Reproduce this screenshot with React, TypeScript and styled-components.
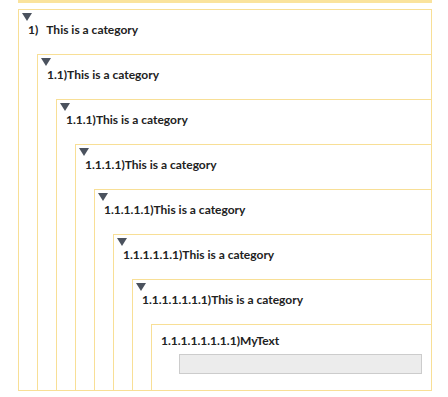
import React from "react";
import styled, { createGlobalStyle } from "styled-components";

const GlobalStyle = createGlobalStyle`
  html, body { margin: 0; padding: 0; background: #ffffff; }
  body { font-family: Lato, "Open Sans", Arial, sans-serif; color: #222222; }
`;

const BORDER = "#f8df96";

const Page = styled.div`
  width: 414px;
  margin-left: 18px;
  display: flex;
  flex-direction: column;
  gap: 6px;
  height: 397px;
  overflow: hidden;
`;

const TopBand = styled.div`
  height: 3px;
  flex-shrink: 0;
  background: #fae39d;
`;

const OuterBox = styled.div`
  border: 1px solid ${BORDER};
  flex-shrink: 0;
`;

const NestedBox = styled.div`
  border-top: 1px solid ${BORDER};
  border-left: 1px solid ${BORDER};
  margin-left: 18px;
`;

const LeafBox = styled(NestedBox)`
  padding-bottom: 16px;
`;

const Header = styled.div`
  height: 44px;
  padding-top: 3px;
  box-sizing: border-box;
  display: flex;
  flex-direction: column;
  align-items: flex-start;
`;

const Triangle = styled.span`
  display: block;
  margin-left: 3px;
  width: 0;
  height: 0;
  border-left: 5px solid transparent;
  border-right: 5px solid transparent;
  border-top: 8px solid #4b525e;
`;

const Label = styled.div<{ $top?: number }>`
  margin-top: ${(p) => p.$top ?? 1}px;
  padding-left: 9px;
  font-size: 12px;
  line-height: 16px;
  font-weight: 700;
  white-space: nowrap;
`;

const Num = styled.span<{ $gap?: number }>`
  margin-right: ${(p) => p.$gap ?? 0}px;
`;

const LeafLabel = styled(Label)`
  margin-top: 8px;
`;

const InputRow = styled.div`
  display: flex;
  padding: 0 9px 0 27px;
  margin-top: 5px;
`;

const Field = styled.input`
  flex: 1;
  height: 20px;
  box-sizing: border-box;
  border: 1px solid #cccccc;
  background: #ececec;
  padding: 0 4px;
  font-size: 12px;
  outline: none;
`;

const NextBox = styled(OuterBox)`
  height: 40px;
  flex-shrink: 1;
  border-bottom: none;
`;

type CatProps = { level: number; max: number };

const numberFor = (level: number) =>
  Array.from({ length: level }, () => "1").join(".");

function Category({ level, max }: CatProps) {
  if (level > max) {
    return (
      <LeafBox>
        <LeafLabel>{numberFor(level)})MyText</LeafLabel>
        <InputRow>
          <Field type="text" />
        </InputRow>
      </LeafBox>
    );
  }
  return (
    <NestedBox>
      <Header>
        <Triangle />
        <Label>
          <Num>{numberFor(level)})</Num>This is a category
        </Label>
      </Header>
      <Category level={level + 1} max={max} />
    </NestedBox>
  );
}

export default function App() {
  return (
    <>
      <GlobalStyle />
      <Page>
        <TopBand />
        <OuterBox>
          <Header>
            <Triangle />
            <Label $top={1}>
              <Num $gap={8}>1)</Num>This is a category
            </Label>
          </Header>
          <Category level={2} max={7} />
        </OuterBox>
        <NextBox />
      </Page>
    </>
  );
}
